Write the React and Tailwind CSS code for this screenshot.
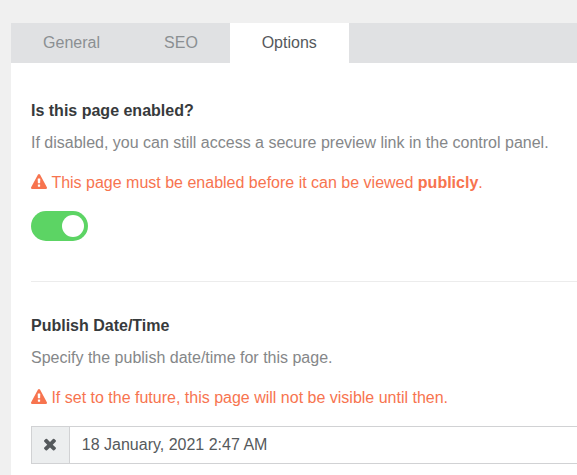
function WarningIcon() {
  return (
    <svg className="mr-[4.4px] mb-[3px] h-[15px] w-4 shrink-0" viewBox="0 0 1792 1664" preserveAspectRatio="none" fill="currentColor" aria-hidden="true">
      <path d="M1024 1375v-190q0-14-9.5-23.5t-22.5-9.5h-192q-13 0-22.5 9.5t-9.5 23.5v190q0 14 9.5 23.5t22.5 9.5h192q13 0 22.5-9.5t9.5-23.5zm-2-374l18-459q0-12-10-19-13-11-24-11h-220q-11 0-24 11-10 7-10 21l17 457q0 10 10 16.5t24 6.5h185q14 0 23.5-6.5t10.5-16.5zm-14-934l768 1408q35 63-2 126-17 29-46.5 46t-63.5 17h-1536q-34 0-63.5-17t-46.5-46q-37-63-2-126l768-1408q17-31 47-49t65-18 65 18 47 49z" />
    </svg>
  );
}

function ClearIcon() {
  return (
    <svg className="mr-[0.6px] mb-[2px] size-[18px] text-[#55595c]" viewBox="0 0 1792 1792" fill="currentColor" aria-hidden="true">
      <path d="M1490 1322q0 40-28 68l-136 136q-28 28-68 28t-68-28l-294-294-294 294q-28 28-68 28t-68-28l-136-136q-28-28-28-68t28-68l294-294-294-294q-28-28-28-68t28-68l136-136q28-28 68-28t68 28l294 294 294-294q28-28 68-28t68 28l136 136q28 28 28 68t-28 68l-294 294 294 294q28 28 28 68z" />
    </svg>
  );
}

function Tab({ children, active, width }) {
  return (
    <div className={`flex h-10 shrink-0 items-center justify-center ${width} ${active ? "bg-white text-[#55595c]" : "text-[#8b8f92]"}`}>
      {children}
    </div>
  );
}

function Field({ label, help, warning, children }) {
  return (
    <section>
      <h2 className="h-6 leading-6 font-bold text-[#373a3c]">{label}</h2>
      <p className="mt-2 h-6 leading-6 text-[#858789]">{help}</p>
      <p className="mt-4 flex h-6 items-center leading-6 text-[#f7744f]">
        <WarningIcon />
        <span>{warning}</span>
      </p>
      {children}
    </section>
  );
}

export default function App() {
  return (
    <div className="h-[475px] w-[577px] overflow-hidden bg-[#f0f0f0] pt-[23px] pl-[11px] font-['Liberation_Sans',Arial,sans-serif] text-base whitespace-nowrap">
      <div className="flex bg-[#e0e1e3]">
        <Tab width="w-[121px]">General</Tab>
        <Tab width="w-[98px]">SEO</Tab>
        <Tab width="w-[118.5px]" active>Options</Tab>
      </div>
      <main className="h-[412px] bg-white pt-9 pl-5">
        <Field
          label="Is this page enabled?"
          help="If disabled, you can still access a secure preview link in the control panel."
          warning={<>This page must be enabled before it can be viewed <b>publicly</b>.</>}
        >
          <div className="mt-4 flex h-[30px] w-[57px] items-center justify-end rounded-full bg-[#5cd464] pr-1">
            <div className="size-[22px] rounded-full bg-white" />
          </div>
        </Field>
        <hr className="mt-10 mb-8 border-[#ececec]" />
        <Field
          label="Publish Date/Time"
          help="Specify the publish date/time for this page."
          warning="If set to the future, this page will not be visible until then."
        >
          <div className="mt-4 flex h-[38px] border border-r-0 border-[#d1d2d4]">
            <div className="flex w-[38px] items-center justify-center border-r border-[#d1d2d4] bg-[#eceeef]">
              <ClearIcon />
            </div>
            <div className="flex items-center pl-[11.8px] text-[#55595c]">18 January, 2021 2:47 AM</div>
          </div>
        </Field>
      </main>
    </div>
  );
}
